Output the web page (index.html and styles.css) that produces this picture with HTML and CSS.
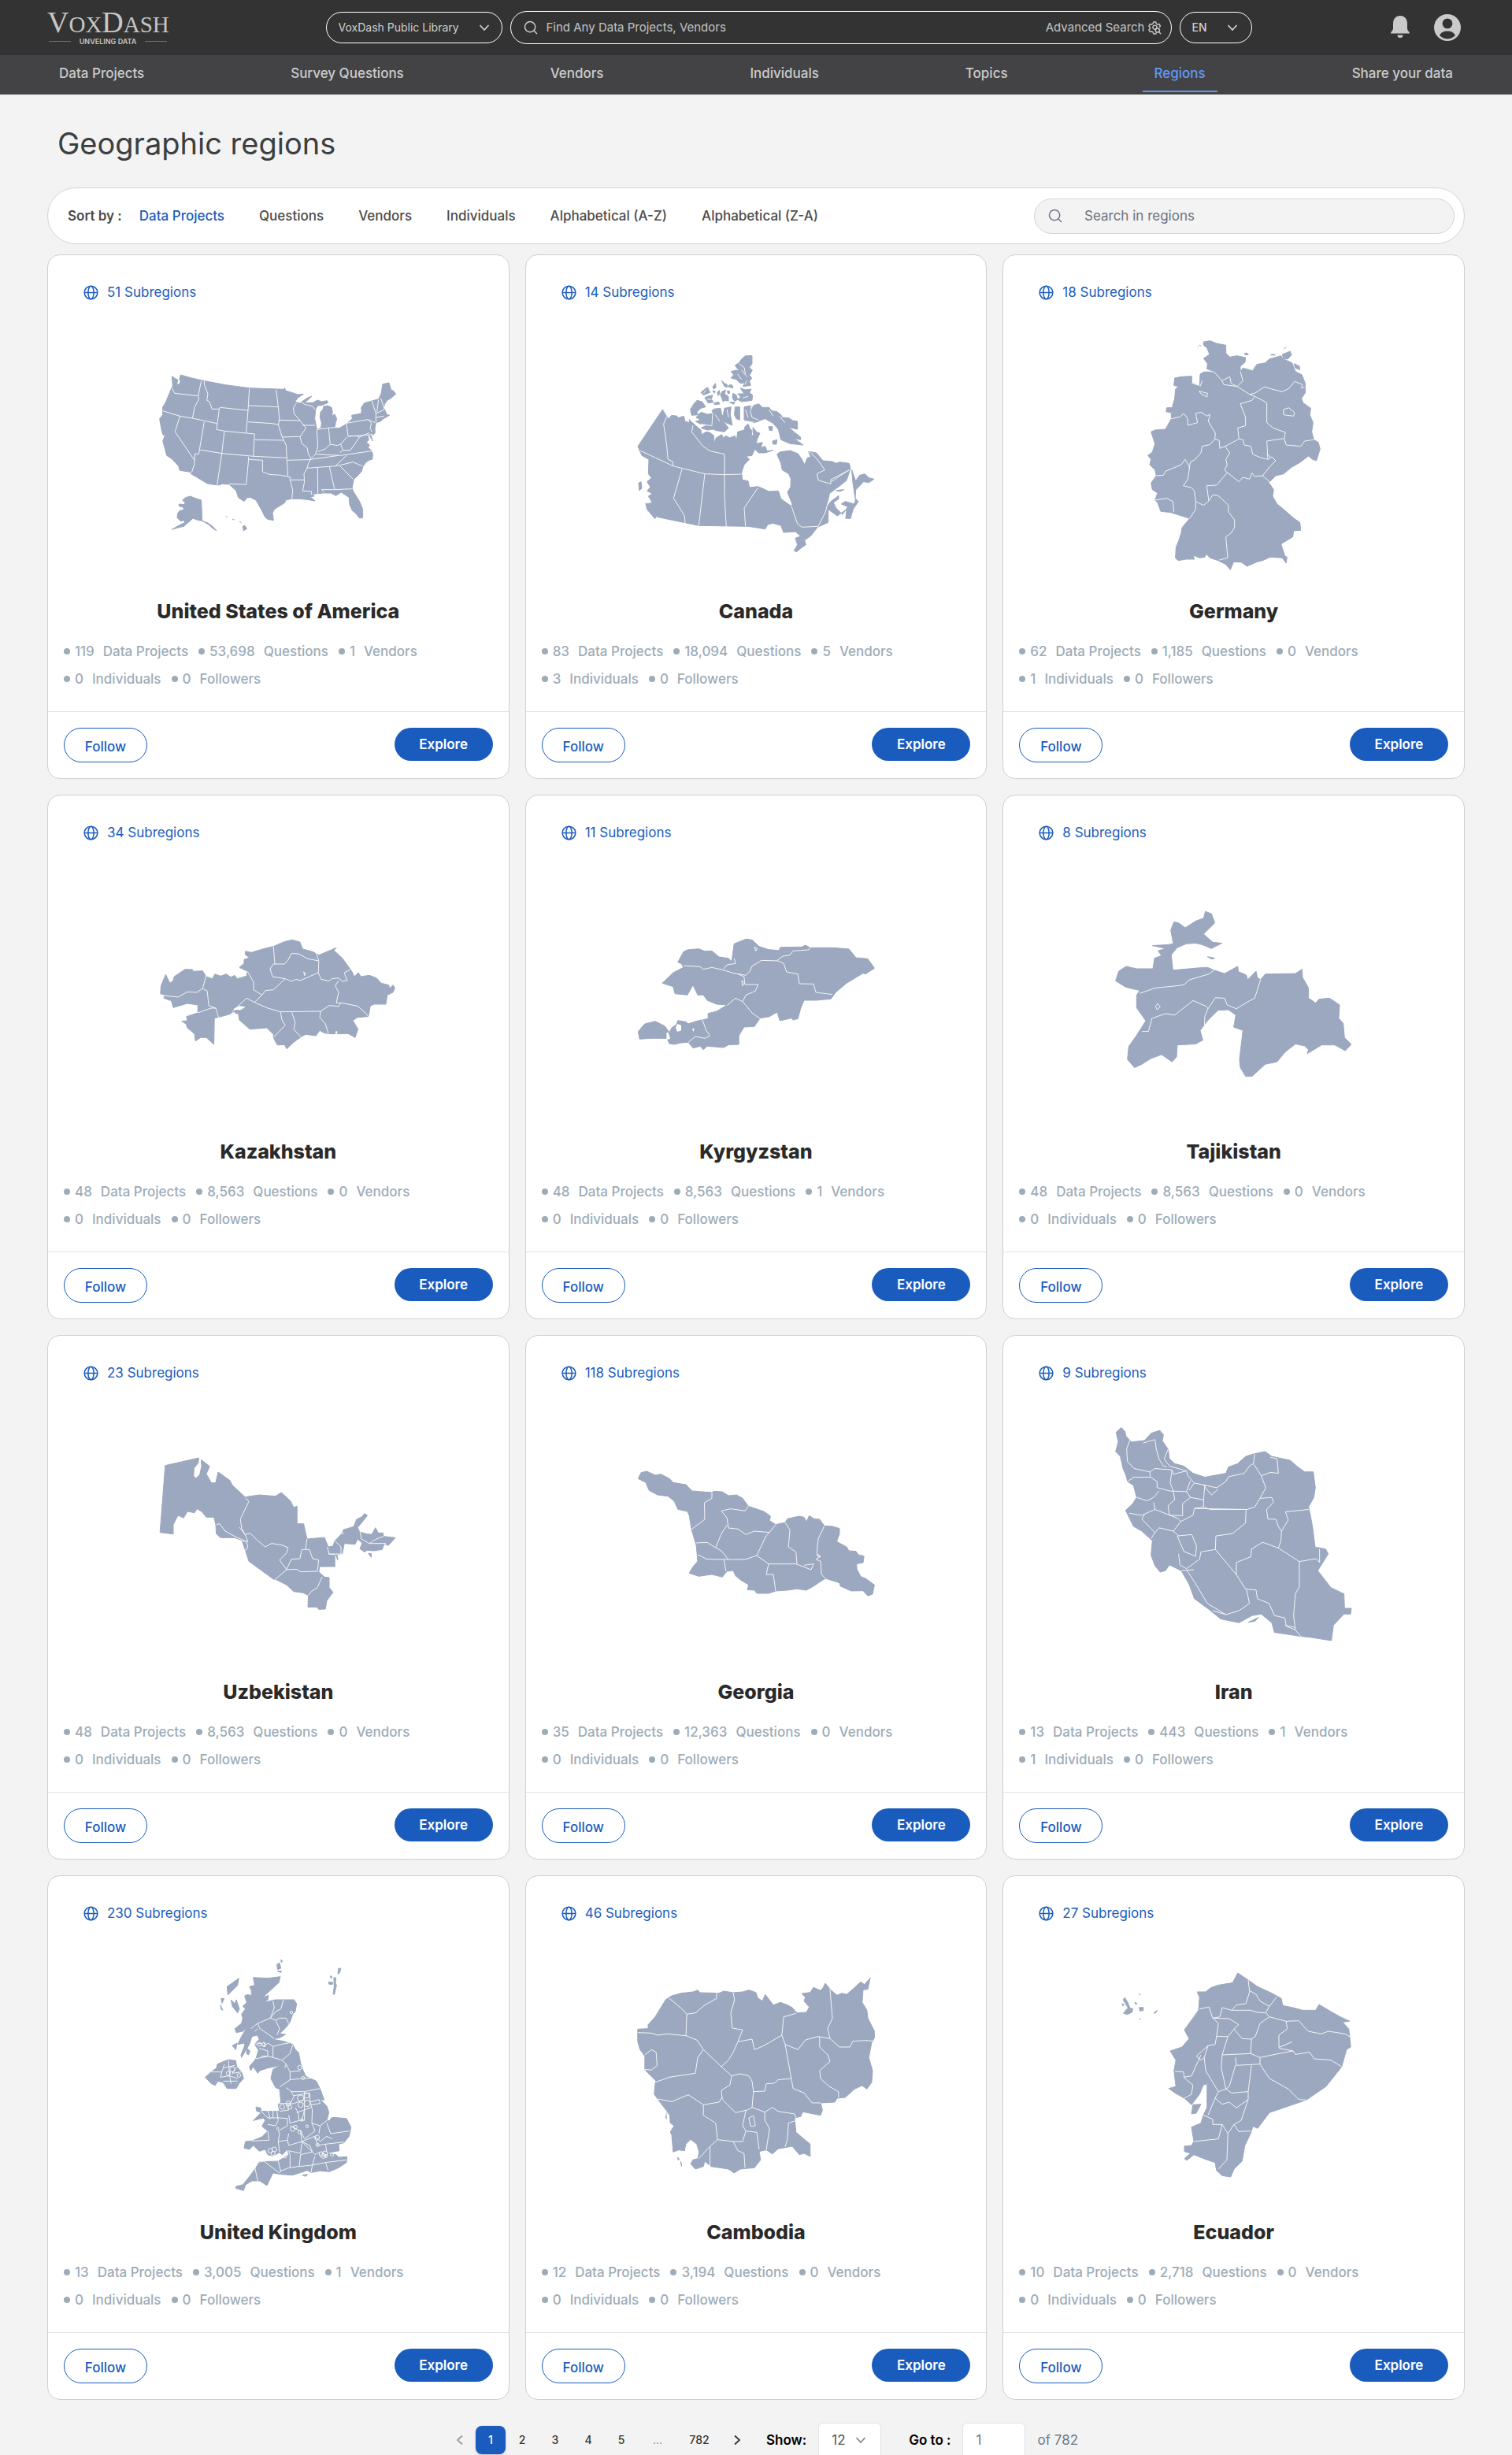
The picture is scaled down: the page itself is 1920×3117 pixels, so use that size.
FILE: index.html
```html
<!DOCTYPE html>
<html lang="en">
<head>
<meta charset="utf-8">
<meta name="viewport" content="width=device-width, initial-scale=1">
<title>VoxDash - Geographic regions</title>
<link rel="stylesheet" href="styles.css">
</head>
<body>
<svg class="sprite" aria-hidden="true">
  <symbol id="globe" viewBox="0 0 20 20"><g fill="none" stroke="currentColor" stroke-width="1.6"><circle cx="10" cy="10" r="8.8"/><ellipse cx="10" cy="10" rx="3.8" ry="8.8"/><path d="M1.2 10h17.6"/></g></symbol>
  <symbol id="chevron" viewBox="0 0 14 14"><path d="M1.5 4l5.500 6 5.500-6" fill="none" stroke="currentColor" stroke-width="1.800"/></symbol>
  <symbol id="search" viewBox="0 0 20 20"><g fill="none" stroke="currentColor" stroke-width="1.600"><circle cx="9" cy="9" r="7.400"/><path d="M14.500 14.500l4.300 4.300"/></g></symbol>
</svg>

<header>
  <div class="topbar">
    <a class="logo" href="#" aria-label="VoxDash">
      <span class="wordmark"><b>V</b>OX<b>D</b>ASH</span>
      <span class="tagline"><i></i>UNVELING DATA<i></i></span>
    </a>
    <div class="finder">
      <label class="pill library">
        <select aria-label="Library"><option>VoxDash Public Library</option></select>
        <svg class="chev"><use href="#chevron"/></svg>
      </label>
      <div class="pill find">
        <svg class="glass"><use href="#search"/></svg>
        <input type="text" placeholder="Find Any Data Projects, Vendors" aria-label="Find any data projects, vendors">
        <a href="#" class="advanced">Advanced Search
          <svg viewBox="0 0 20 20"><g fill="none" stroke="currentColor" stroke-width="1.700"><path d="M13 17.500h-1l-.6 1.300H8l-.8-2.500-2.200-1.200-2.400.6L1 12.800l1.800-1.900V9L1 7.200l1.700-3 2.400.7 2-1.200.8-2.500h3.500l.8 2.500 2 1.200 2.400-.7 1.600 3L16.500 9"/><circle cx="10" cy="9" r="3"/><circle cx="14" cy="13.500" r="3"/><path d="M16 15.800l3 3.200"/></g></svg>
        </a>
      </div>
      <label class="pill language">
        <select aria-label="Language"><option>EN</option></select>
        <svg class="chev thin"><use href="#chevron"/></svg>
      </label>
    </div>
    <div class="account">
      <button type="button" aria-label="Notifications"><svg width="26" height="30" viewBox="0 0 26 30"><path fill="currentColor" d="M13 0C7 0 4 4.500 4 10v6c0 3-3 4-3 6.500h24C25 20 22 19 22 16v-6C22 4.500 19 0 13 0zM9.500 24.500h7a3.500 3.500 0 0 1-7 0z"/></svg></button>
      <button type="button" aria-label="Account"><svg width="34" height="34" viewBox="0 0 34 34"><path fill="currentColor" fill-rule="evenodd" d="M17 0a17 17 0 1 1 0 34a17 17 0 1 1 0-34zM17 5.500a6.400 6.400 0 1 0 0 12.800a6.400 6.400 0 1 0 0-12.800zM17 21.500c-5 0-8.500 2-10 5.500a14 14 0 0 0 20 0c-1.500-3.500-5-5.500-10-5.500z"/></svg></button>
    </div>
  </div>
  <nav class="mainnav" aria-label="Main">
    <a href="#">Data Projects</a><a href="#">Survey Questions</a><a href="#">Vendors</a><a href="#">Individuals</a><a href="#">Topics</a><a href="#" class="current" aria-current="page">Regions</a><a href="#">Share your data</a>
  </nav>
</header>

<main>
  <h1>Geographic regions</h1>
  <div class="sortbar">
    <span class="sortlabel">Sort by :</span>
    <div class="sorts"><a href="#" class="on">Data Projects</a><a href="#">Questions</a><a href="#">Vendors</a><a href="#">Individuals</a><a href="#">Alphabetical (A-Z)</a><a href="#">Alphabetical (Z-A)</a></div>
    <div class="regionsearch"><svg class="glass"><use href="#search"/></svg><input type="text" placeholder="Search in regions" aria-label="Search in regions"></div>
  </div>

  <section class="grid">
    <article class="card">
      <a href="#" class="sub"><svg><use href="#globe"/></svg>51 Subregions</a>
      <svg class="map" viewBox="0 0 300 300" role="img" aria-label="Map of the United States of America"><g transform="translate(-13 -5) scale(.3333)">
        <path class="land" d="M85 173L98 182 107 186 104 203 112 205 117 195 114 183 118 168 160 180 210 191 290 206 380 218 512 223 514 217 518 228 545 236 565 243 586 241 565 255 554 270 572 276 600 256 618 249 605 262 590 274 622 274 640 264 655 270 676 266 680 274 655 284 640 285 632 300 629 335 637 376 653 370 655 350 649 330 651 310 660 300 663 288 678 285 693 292 697 310 693 325 705 318 713 335 708 352 705 370 722 371 750 355 772 335 770 322 806 315 808 300 805 295 818 275 847 267 872 260 882 240 888 203 912 198 920 225 930 230 938 241 918 258 905 265 895 280 892 293 898 305 903 318 914 322 890 335 880 345 862 350 858 372 859 388 850 398 840 390 845 405 850 420 838 400 830 395 835 415 826 425 838 435 832 445 844 455 850 470 848 490 838 492 825 500 812 518 808 535 790 555 778 565 771 600 778 615 800 650 812 680 812 712 800 714 785 695 772 685 762 662 760 635 745 625 730 615 710 628 690 618 660 618 640 620 620 622 628 630 612 632 630 648 600 643 570 640 540 640 518 645 515 655 475 680 468 695 472 722 450 718 440 710 425 680 405 645 385 635 372 635 360 650 338 635 330 610 303 585 278 583 262 588 220 582 158 545 156 538 115 532 110 515 85 488 65 475 60 455 50 420 58 400 50 395 44 370 38 335 50 320 50 290 60 275 82 222 88 210Z"/>
        <path class="land" d="M197 645L200 724 180 720 165 714 150 728 130 745 108 750 85 757 110 742 135 730 130 722 118 725 105 712 107 695 115 685 130 682 128 672 112 668 112 660 132 662 135 655 125 645 138 635 155 630 175 638ZM200 724L222 732 240 745 255 762 240 752 225 738ZM355 745l6 -4 10 12-13 9zM342 727l8 4M290 706l6 4M315 717l8 3"/>
        <path class="line" d="M85 218L95 238 185 248M197 190L185 248 187 262 172 290 163 333M50 305L115 325 163 333 256 353M115 325L97 385 170 492M208 190L208 205 222 240 218 265 228 270 238 298 265 298 268 292 375 303M265 298L255 376 285 382 400 393 395 478M380 220L375 303 368 388M378 285L490 290 495 340 490 357 505 405 520 435 523 490M482 224L490 290M375 347L465 353 490 357M400 415L510 417M208 348L187 470 173 468 170 510 160 540M190 453L275 467 257 588M285 382L275 467 395 478 523 484M377 480L377 490 430 493 430 537 455 547 500 550 535 557 535 568 545 605 542 640M377 490L368 586 303 583M523 490L527 553M523 493L605 491M535 568L588 568M490 340L573 342 590 362 595 372 573 403 505 405M573 403L580 430 600 445 605 470 615 485 605 505 600 523 588 545 590 575 583 610 617 612 617 625M573 342L550 315 548 292 560 275M565 262L590 280 620 287 630 300M582 360L630 360M637 376L641 440 632 470 617 485M637 376L682 370 708 368M682 370L688 432 670 450 641 460M688 432L715 437 728 432 737 455 765 455 800 405 785 400 756 402 750 352 832 338 845 352 840 372 848 385M728 432L752 405M800 405L838 388M756 402L850 395M725 465L737 455M632 470L725 475 845 458M605 491L720 475M600 523L708 515 750 475M708 515L725 512 775 500 810 515M725 515L775 565M640 520L641 620M685 517L705 605 655 605 665 615M705 605L771 602M832 338L858 350M847 267L862 315 862 350M872 262L866 310M880 255L895 300 862 315M862 330L893 325"/>
      </g></svg>
      <h2>United States of America</h2>
      <ul><li>119<span>Data Projects</span></li><li>53,698<span>Questions</span></li><li>1<span>Vendors</span></li><li>0<span>Individuals</span></li><li>0<span>Followers</span></li></ul>
      <footer><button type="button" class="follow">Follow</button><button type="button" class="explore">Explore</button></footer>
    </article>

    <article class="card">
      <a href="#" class="sub"><svg><use href="#globe"/></svg>14 Subregions</a>
      <svg class="map" viewBox="0 0 300 300" role="img" aria-label="Map of Canada"><g transform="translate(-20 -5) scale(.3333)">
        <path class="land" d="M154 300L170 327 178 335 188 322 210 325 212 332 235 325 240 345 258 350 255 338 270 352 285 365 300 378 303 395 320 385 335 388 350 400 350 430 358 408 380 395 385 408 395 400 410 408 430 400 436 420 440 385 465 378 468 365 480 355 487 372 495 380 492 405 500 395 498 368 512 385 525 390 515 412 510 430 535 425 528 445 545 440 552 458 575 455 545 465 520 465 505 450 490 440 470 435 500 437 506 450 495 475 472 478 485 490 465 510 455 540 458 568 480 572 485 597 518 593 560 612 595 610 605 640 645 668 648 660 630 615 642 595 643 565 635 545 610 530 605 505 590 470 600 462 640 456 670 468 685 490 695 510 705 485 718 480 710 460 740 465 765 495 800 498 815 505 830 500 865 505 870 525 855 570 830 590 790 620 780 670 795 650 825 628 825 640 805 655 815 675 840 700 860 670 835 660 850 650 885 660 890 640 900 650 880 680 870 715 852 715 855 680 820 705 785 680 785 730 745 748 720 780 695 798 700 815 685 825 665 842 655 838 668 815 660 790 680 782 660 765 615 768 605 742 575 733 555 738 545 755 480 745 292 742 138 710 120 700 90 660 115 655 100 630 115 620 95 610 108 595 95 575 112 560 100 545 102 490 75 475 60 440ZM875 530L890 572 905 550 925 545 940 560 960 565 940 578 920 575 890 606 888 640 878 570ZM500 285L520 278 535 292 560 292 570 305 590 308 605 320 610 330 635 332 650 342 668 345 668 375 635 368 655 385 680 405 680 415 655 410 690 435 640 430 605 415 600 395 595 375 575 352 545 335 500 350 520 345 490 345 480 310ZM465 290L490 285 485 310 500 345 465 340ZM495 95L470 95 455 108 445 122 430 132 440 145 452 152 435 150 415 155 425 168 415 180 435 185 450 200 468 198 460 212 490 208 485 192 494 180 485 170 496 150 485 140 495 125ZM450 218L470 225 492 222 485 235 497 245 495 265 475 268 455 270 440 262 452 252 440 240 465 240ZM260 300L272 280 285 265 305 270 318 290 300 295 285 310 290 320 265 322ZM282 330L300 310 325 318 345 315 342 305 350 298 375 295 380 320 395 335 390 350 405 370 390 385 360 380 345 375 325 378 300 370 325 360 298 355 280 345 300 340ZM390 295L415 290 412 320 420 360 395 350 385 320ZM430 290L448 290 448 340 435 335 428 320ZM300 235L312 225 325 215 330 225 335 235 322 240 310 245ZM315 255L325 250 345 245 340 260 348 272 328 275ZM380 190L390 200 400 205 400 215 390 212 385 202ZM402 212L412 205 420 208 422 218ZM345 215L355 200 358 215 350 222ZM375 245L380 232 395 225 390 240 405 250 405 268 392 265 385 270ZM422 238L435 245 440 262 428 268 420 255ZM362 235l8-8 2 14-6 6zM345 228l10 2-4 8zM400 230l8-2 2 10-6 2zM410 272l20 0-6 8zM350 275l18-4 4 8-20 2zM90 658L110 678 132 705 125 716 95 680ZM63 580L72 575 75 600 65 608ZM558 365L573 365 572 380 562 380ZM573 420L590 415 588 432 575 432ZM815 608L845 605 830 612Z"/>
        <path class="line" d="M170 327L158 355 165 400 170 440 175 490 192 497 194 515M70 457L194 515 315 545 390 548 455 546M228 527L196 638 238 705 240 735M315 545L292 742M390 470L390 630 397 748M390 470L335 458 308 440 265 385 270 360M300 355L342 362 345 310M518 597L465 675 470 745M645 668L668 735 685 748 745 745M712 460L740 485 772 530 742 545 748 570 795 583 795 567 865 530M797 575L865 530M785 650L775 690 745 748M500 280L488 305 495 330 520 340M470 300L480 330M455 150L475 175M445 125L465 140 470 165M440 165L455 185M475 190L468 205M320 225L310 238M325 260L340 262M460 255L480 250M400 300L405 330M355 320L372 345M600 325L620 350M560 300L575 325"/>
      </g></svg>
      <h2>Canada</h2>
      <ul><li>83<span>Data Projects</span></li><li>18,094<span>Questions</span></li><li>5<span>Vendors</span></li><li>3<span>Individuals</span></li><li>0<span>Followers</span></li></ul>
      <footer><button type="button" class="follow">Follow</button><button type="button" class="explore">Explore</button></footer>
    </article>

    <article class="card">
      <a href="#" class="sub"><svg><use href="#globe"/></svg>18 Subregions</a>
      <svg class="map" viewBox="0 0 300 300" role="img" aria-label="Map of Germany"><g transform="translate(-17 -5) scale(.3333)">
        <path class="land" d="M385 42L410 38 435 48 470 55 470 85 485 100 512 95 545 102 543 120 525 135 525 155 535 142 572 152 588 128 620 122 635 108 680 95 690 108 722 122 735 155 760 168 772 200 773 235 758 258 765 275 793 295 790 320 802 350 797 385 805 415 822 425 829 450 815 495 800 490 785 477 750 503 720 520 690 545 660 552 637 575 628 570 652 605 648 630 665 660 690 680 730 715 752 730 755 760 728 762 725 785 680 812 695 858 703 862 700 885 685 865 640 862 610 875 590 880 550 897 530 882 500 880 487 910 470 890 440 875 410 865 395 850 390 862 370 865 345 855 350 870 320 870 288 875 278 865 280 825 290 800 300 770 303 750 332 715 285 700 260 692 222 688 210 655 200 645 210 618 190 605 185 580 205 552 200 530 180 510 185 490 173 475 190 462 200 430 185 385 200 378 240 375 262 335 262 312 242 308 245 293 265 293 275 258 278 222 290 212 272 208 275 180 300 175 340 173 340 200 370 212 372 165 385 157 425 155 398 145 400 125 385 105 408 90 398 65 385 55ZM540 88L548 84 556 90 546 92ZM685 90L715 78 720 92 705 108 690 105ZM730 125L750 135 752 148 735 142ZM640 92l12-3 6 4zM692 68l8-5M362 62l3 2M368 55l8 2"/>
        <path class="line" d="M398 152L425 157 455 190 462 205 513 212 535 190 525 155M455 190L485 175 490 200 513 212 560 242 580 250 610 265 626 275 626 350 650 370 697 387 692 410 700 435 755 440 770 420 805 415M560 242L580 238 618 213 645 222 685 232 710 220 732 193 762 205 757 218 770 215M580 250L570 265 525 278 545 330 545 362 515 370 520 412 467 440 447 448 445 418 428 412M262 335L295 328 310 315 325 335 325 360 362 350 355 315 375 310 398 325 410 318 403 345 430 390 428 412 410 433 380 440 375 465 350 492 335 500 330 525M205 552L232 550 240 535 300 510 315 490 332 520 325 565 308 590 340 598 350 610 355 650 355 680 332 715M467 440L485 465 470 490 475 510 465 530 475 540 520 575 535 558 560 565 570 542 580 555 610 552 640 515 660 495 645 480 630 490 600 482 572 470 565 440 540 435 535 415 520 412M630 490L626 420 692 410M640 480L626 470M475 540L435 588 397 590 405 648 385 665 355 650M405 648L420 625 440 628 470 655 480 665 480 690 503 720 503 750 490 770 470 785 477 865 445 873M200 645L245 638 268 650 272 690M610 552L637 575M368 230L400 238 398 252 375 240ZM690 320L690 300 710 293 732 312 728 325ZM340 200L355 195 350 205M372 212L380 190"/>
      </g></svg>
      <h2>Germany</h2>
      <ul><li>62<span>Data Projects</span></li><li>1,185<span>Questions</span></li><li>0<span>Vendors</span></li><li>1<span>Individuals</span></li><li>0<span>Followers</span></li></ul>
      <footer><button type="button" class="follow">Follow</button><button type="button" class="explore">Explore</button></footer>
    </article>

    <article class="card">
      <a href="#" class="sub"><svg><use href="#globe"/></svg>34 Subregions</a>
      <svg class="map" viewBox="0 0 300 300" role="img" aria-label="Map of Kazakhstan"><g transform="translate(-13 69) scale(.6 .3333)">
        <path class="land" d="M23 245L24 215 34 172 43 205 50 195 52 180 75 152 91 153 92 160 112 158 120 180 133 188 138 170 150 178 162 170 172 182 180 175 185 188 205 178 207 160 190 145 200 130 200 115 211 108 202 95 203 83 215 88 245 72 262 65 285 47 302 40 318 48 324 75 345 85 358 98 395 70 390 80 408 110 428 160 433 180 442 165 447 180 465 175 480 185 490 205 506 212 508 225 515 212 519 222 515 240 503 250 500 285 475 285 467 292 463 332 440 335 430 347 441 380 435 412 420 397 385 398 370 395 360 385 352 405 330 400 320 410 305 430 290 455 286 440 270 440 262 412 262 400 248 375 212 380 190 345 188 322 178 318 160 328 137 338 136 438 120 412 108 412 97 425 95 398 80 375 77 360 68 350 80 348 78 332 102 318 102 288 80 282 50 298 46 272 30 262 32 250Z"/>
        <path class="line" d="M23 250L60 258 80 238 100 240 112 225 122 235 125 290 140 300 146 335M120 175L112 225M102 318L130 300 140 300M207 160L220 200 220 230 238 250 222 278 205 262 180 305 170 328M238 250L245 233 262 230 287 188 300 198 310 190 318 195 335 182 357 165 358 120 335 112 315 93 300 92 292 120 285 132 262 132 255 150 260 180 287 188M262 65L265 132M352 88L358 120M357 165L363 190 380 197 385 188 400 185 408 198 418 195 412 165 425 153M400 195L393 215 400 240 395 280 405 280 400 293 380 290 362 312 277 314 250 300 222 278M405 280L440 292 458 320 463 332M277 314L280 345 287 365 262 412M301 316L308 355 305 380 320 410M362 312L360 335 372 360 378 395M326 162l4 5-2 9z"/>
        <path class="gap" d="M178 302l12-10 13 3-10 12-15 0zM175 318l6-3-2 20zM394 388l3 0v10h-4z"/>
      </g></svg>
      <h2>Kazakhstan</h2>
      <ul><li>48<span>Data Projects</span></li><li>8,563<span>Questions</span></li><li>0<span>Vendors</span></li><li>0<span>Individuals</span></li><li>0<span>Followers</span></li></ul>
      <footer><button type="button" class="follow">Follow</button><button type="button" class="explore">Explore</button></footer>
    </article>

    <article class="card">
      <a href="#" class="sub"><svg><use href="#globe"/></svg>11 Subregions</a>
      <svg class="map" viewBox="0 0 300 300" role="img" aria-label="Map of Kyrgyzstan"><g transform="translate(-620 69) scale(.6 .3333)">
        <path class="land" d="M1118 125L1130 85 1138 78 1162 74 1175 83 1190 82 1205 105 1225 110 1232 122 1237 55 1262 37 1275 40 1290 65 1310 77 1332 80 1335 68 1380 67 1388 60 1398 70 1450 70 1480 75 1495 108 1520 112 1534 148 1515 170 1510 167 1475 205 1452 240 1442 265 1410 270 1385 270 1378 300 1372 340 1362 345 1358 338 1334 348 1328 315 1312 332 1292 338 1280 370 1258 372 1247 405 1247 438 1225 440 1215 450 1180 445 1172 458 1165 445 1150 452 1140 430 1125 432 1110 438 1100 435 1095 415 1060 415 1037 418 1034 390 1042 372 1048 360 1070 350 1090 368 1100 392 1105 375 1115 362 1118 347 1135 352 1140 360 1160 348 1170 345 1182 340 1182 320 1200 312 1222 288 1200 285 1180 270 1172 250 1160 250 1150 212 1138 250 1112 245 1108 218 1085 205 1108 165 1130 145 1125 130Z"/>
        <path class="line" d="M1130 138L1165 142 1172 152 1190 145 1215 155 1232 165 1262 175 1270 160 1275 140 1295 118 1330 120 1342 130 1348 162 1372 170 1375 207 1405 208 1410 240 1445 248M1328 118L1340 102 1355 98 1362 82 1395 78 1398 68M1215 150L1222 135 1240 130 1237 110M1245 170L1258 180 1260 210 1288 210 1282 235 1262 250 1255 275 1240 262 1222 290M1255 275L1275 318 1292 340M1170 345L1178 385 1186 405 1175 415 1155 408 1140 430M1253 195l6 8-4 12zM1280 68l6 5-3 9z"/>
        <path class="gap" d="M1117 360l8 5 0 20-8 5-4-15zM1094 392l4 2 4 22-8 5zM1148 378l5 0-2 12z"/>
      </g></svg>
      <h2>Kyrgyzstan</h2>
      <ul><li>48<span>Data Projects</span></li><li>8,563<span>Questions</span></li><li>1<span>Vendors</span></li><li>0<span>Individuals</span></li><li>0<span>Followers</span></li></ul>
      <footer><button type="button" class="follow">Follow</button><button type="button" class="explore">Explore</button></footer>
    </article>

    <article class="card">
      <a href="#" class="sub"><svg><use href="#globe"/></svg>8 Subregions</a>
      <svg class="map" viewBox="0 0 300 300" role="img" aria-label="Map of Tajikistan"><g transform="translate(-17 29) scale(.3333 .6122)">
        <path class="land" d="M50 172L62 152 90 142 130 147 192 147 198 125 225 120 212 110 240 105 190 99 250 97 270 95 260 67 272 50 290 52 315 62 355 48 385 42 392 28 415 33 428 52 385 75 420 92 455 94 415 105 380 97 355 94 320 95 285 103 262 118 268 150 370 145 400 144 425 150 465 157 515 142 518 153 548 160 553 170 585 152 590 165 602 170 620 158 735 157 760 148 762 165 785 187 785 208 812 218 825 210 865 208 903 222 900 250 917 260 922 290 948 304 925 317 885 305 835 305 780 323 785 315 770 307 735 303 695 320 665 340 620 345 570 370 545 370 525 352 522 335 535 275 500 268 508 243 480 232 440 233 400 255 372 275 382 295 355 303 285 305 282 330 265 340 225 325 185 333 150 345 122 352 95 335 100 308 130 285 165 255 130 228 130 202 142 192 88 185ZM400 122l28 3-12 2z"/>
        <path class="line" d="M142 198L200 187 290 182 312 180 330 170 405 158 425 150M150 277L175 277 188 250 240 240 275 243 345 213 395 225 402 230 430 207 465 208 475 222 510 230 555 215 580 208 602 170M402 230L390 245 388 268M202 225l8-6 10 7-12 6z"/>
      </g></svg>
      <h2>Tajikistan</h2>
      <ul><li>48<span>Data Projects</span></li><li>8,563<span>Questions</span></li><li>0<span>Vendors</span></li><li>0<span>Individuals</span></li><li>0<span>Followers</span></li></ul>
      <footer><button type="button" class="follow">Follow</button><button type="button" class="explore">Explore</button></footer>
    </article>

    <article class="card">
      <a href="#" class="sub"><svg><use href="#globe"/></svg>23 Subregions</a>
      <svg class="map" viewBox="0 0 300 300" role="img" aria-label="Map of Uzbekistan"><g transform="translate(-13 42) scale(.6 .3333)">
        <path class="land" d="M22 320L33 65 104 36 103 55 94 75 93 105 98 114 106 100 110 68 109 43 127 68 120 97 131 132 140 130 145 90 170 122 175 140 202 185 232 177 266 182 279 168 298 200 305 225 312 220 312 287 326 287 333 345 370 339 378 375 388 372 392 352 405 328 410 310 432 298 438 270 448 262 455 248 461 256 440 302 445 318 458 325 470 328 478 302 484 322 494 322 495 335 520 340 505 370 497 362 492 385 475 390 460 388 455 395 445 382 450 360 440 345 435 365 412 362 408 400 392 408 392 450 360 450 358 470 370 490 380 492 380 530 388 548 375 580 372 612 358 613 353 604 335 605 336 560 325 550 305 545 290 520 268 500 262 498 210 430 203 390 195 350 180 340 150 340 141 325 140 290 136 262 120 262 110 240 100 230 95 245 80 240 72 265 60 255 50 290 50 326ZM463 400l6 0 0 15zM395 410l3 0 0 16z"/>
        <path class="line" d="M202 188L210 202 192 270 195 305 202 328 213 323 228 350 245 375 258 362 280 368 293 378 290 398 275 425 290 462 310 460 320 470 355 468M141 290L148 287 160 315 180 335 205 355 208 375 203 390M190 300L202 328 208 355 195 352M290 462L265 500M290 460L300 422 318 420 322 385 338 385 345 420 358 425 355 468M333 345L330 385M365 490L355 530 342 545 336 560M376 375L380 402 405 402 405 375 392 352M378 402L392 405M445 310L448 345 465 362 480 345 495 335M465 362L500 362M403 320l5 -4 1 10z"/>
      </g></svg>
      <h2>Uzbekistan</h2>
      <ul><li>48<span>Data Projects</span></li><li>8,563<span>Questions</span></li><li>0<span>Vendors</span></li><li>0<span>Individuals</span></li><li>0<span>Followers</span></li></ul>
      <footer><button type="button" class="follow">Follow</button><button type="button" class="explore">Explore</button></footer>
    </article>

    <article class="card">
      <a href="#" class="sub"><svg><use href="#globe"/></svg>118 Subregions</a>
      <svg class="map" viewBox="0 0 300 300" role="img" aria-label="Map of Georgia"><g transform="translate(-620 42) scale(.6 .3333)">
        <path class="land" d="M1034 115L1040 92 1052 87 1070 102 1082 98 1100 115 1108 130 1135 138 1148 162 1190 168 1195 163 1212 165 1225 180 1242 177 1255 190 1267 220 1300 240 1314 258 1312 275 1325 290 1345 282 1350 268 1375 258 1385 262 1390 280 1396 256 1406 268 1418 270 1428 295 1445 297 1460 305 1460 325 1454 355 1475 375 1480 390 1495 392 1500 405 1512 410 1510 435 1496 440 1497 460 1505 488 1515 495 1534 520 1530 555 1520 562 1510 542 1485 543 1462 525 1460 512 1430 495 1405 525 1390 540 1370 535 1350 540 1325 543 1310 552 1285 552 1280 540 1265 538 1268 520 1250 500 1240 485 1235 465 1222 468 1212 490 1190 480 1162 487 1142 475 1150 450 1160 430 1157 370 1147 310 1142 255 1138 240 1118 232 1110 200 1097 182 1075 177 1057 160 1050 130Z"/>
        <path class="line" d="M1190 168L1190 190 1174 207 1175 270 1147 308M1267 220L1260 238 1230 230 1210 238 1222 265 1225 303 1245 307 1262 328 1280 315 1312 320 1325 290M1222 292L1210 325 1198 378M1157 360L1180 358 1198 378 1210 390 1225 423M1160 405L1180 422 1215 423 1260 423 1285 408 1305 332 1312 320M1285 408L1310 440 1368 440 1400 462 1405 440 1385 445M1345 282L1355 310 1352 375 1368 395 1370 440M1428 295L1415 345 1412 400 1420 412 1410 422 1420 430 1422 480 1430 495M1310 440L1305 480 1320 480 1325 543M1215 423L1220 468M1412 405l7 4-3 6z"/>
      </g></svg>
      <h2>Georgia</h2>
      <ul><li>35<span>Data Projects</span></li><li>12,363<span>Questions</span></li><li>0<span>Vendors</span></li><li>0<span>Individuals</span></li><li>0<span>Followers</span></li></ul>
      <footer><button type="button" class="follow">Follow</button><button type="button" class="explore">Explore</button></footer>
    </article>

    <article class="card">
      <a href="#" class="sub"><svg><use href="#globe"/></svg>9 Subregions</a>
      <svg class="map" viewBox="0 0 300 300" role="img" aria-label="Map of Iran"><g transform="translate(-17 -658) scale(.3333 .6122)">
        <path class="land" d="M52 1110L72 1100 85 1108 90 1118 110 1130 160 1127 185 1112 218 1106 232 1115 228 1128 250 1145 255 1165 275 1175 310 1180 345 1195 390 1203 470 1195 480 1182 515 1175 545 1160 575 1155 620 1150 645 1160 715 1168 740 1180 770 1192 803 1192 811 1225 805 1245 785 1265 792 1282 800 1305 810 1348 850 1352 860 1362 820 1397 870 1432 920 1445 922 1475 948 1475 945 1487 920 1487 880 1510 872 1542 790 1535 755 1533 655 1525 645 1505 605 1487 570 1490 520 1505 450 1497 400 1475 350 1455 330 1425 300 1397 255 1385 240 1397 220 1400 200 1387 185 1365 190 1335 150 1315 118 1305 100 1285 88 1272 115 1258 130 1245 118 1220 95 1212 90 1200 78 1185 68 1160 50 1150 60 1130ZM555 1504l40-10-15 8z"/>
        <path class="line" d="M105 1125L92 1145 95 1170 120 1185 180 1192 182 1203 208 1212 208 1225M155 1132L200 1125 205 1145 215 1165 232 1180 245 1182M250 1145L235 1165 255 1180 320 1190 325 1200 350 1215 435 1225 470 1212 480 1202 540 1195 560 1180 575 1175 580 1155M180 1192L200 1185 265 1188 270 1197 320 1190M95 1212L120 1203 182 1203M265 1188L258 1215 270 1232 320 1233 335 1210M210 1225L258 1232 270 1232M130 1245L170 1252 195 1245 215 1232M102 1278L150 1282 200 1270 195 1255M160 1280L150 1290 200 1318 215 1308 270 1315 298 1295 345 1282 350 1268 547 1270 545 1298 495 1320 432 1325 430 1353 510 1405 510 1380 565 1368 568 1352 610 1338 670 1350 750 1378 750 1430 735 1445 728 1490 735 1520 700 1512 695 1495 655 1490 635 1465 590 1455 585 1437 545 1435 510 1405M200 1270L285 1288 298 1295M185 1330L200 1318M270 1232L275 1250 250 1262 255 1282 305 1283 305 1258 335 1245M320 1233L335 1245 385 1250 390 1218M350 1268L385 1265 385 1250M350 1215L330 1230M385 1220L415 1240 440 1228M385 1265L410 1270 550 1270 580 1265 600 1247 622 1225 605 1200 640 1193 670 1195 665 1165 640 1162M575 1175L605 1200M600 1247L645 1245 652 1255 625 1270 630 1290 660 1290 670 1305 682 1315 680 1335 670 1350M682 1315L708 1292 697 1275 785 1270M285 1325L340 1322 358 1345 355 1367 310 1357ZM290 1362L295 1385 320 1393 370 1373 375 1358 430 1353M270 1315L290 1325M320 1395L350 1420 400 1465 470 1488 520 1480 560 1465 548 1435M300 1397L348 1395M420 1480L470 1488M750 1378L815 1372 827 1380 827 1352M735 1520L755 1533M695 1510L735 1515"/>
      </g></svg>
      <h2>Iran</h2>
      <ul><li>13<span>Data Projects</span></li><li>443<span>Questions</span></li><li>1<span>Vendors</span></li><li>1<span>Individuals</span></li><li>0<span>Followers</span></li></ul>
      <footer><button type="button" class="follow">Follow</button><button type="button" class="explore">Explore</button></footer>
    </article>

    <article class="card">
      <a href="#" class="sub"><svg><use href="#globe"/></svg>230 Subregions</a>
      <svg class="map" viewBox="0 0 300 300" role="img" aria-label="Map of the United Kingdom"><g transform="translate(37 -4) scale(.3333)">
        <path class="land" d="M245 95L300 98 348 92 342 115 295 158 280 172 303 163 300 180 285 190 330 180 400 180 410 195 405 225 395 235 385 265 370 285 355 300 345 310 368 312 345 325 315 330 360 338 395 350 405 370 418 382 425 420 435 450 445 472 485 490 500 520 515 562 500 560 525 585 533 610 525 640 512 645 535 640 545 628 600 632 617 665 610 700 590 725 570 730 572 755 520 765 560 770 570 780 602 778 600 800 570 820 535 835 500 832 465 838 450 830 420 840 395 848 350 845 320 840 310 860 297 888 270 870 240 870 215 885 208 907 178 898 180 890 205 885 225 860 255 820 268 797 340 795 380 770 375 750 355 770 345 762 320 775 300 770 290 750 268 757 245 735 230 750 210 745 215 720 240 718 278 702 300 680 278 662 290 640 285 630 245 640 270 615 275 605 345 605 340 580 350 570 345 520 330 515 312 480 320 445 350 430 300 440 270 450 262 460 245 435 235 450 230 435 255 405 265 372 250 350 268 330 260 315 240 320 230 350 215 375 200 400 198 390 212 355 212 345 185 350 200 320 215 295 240 270 205 300 180 305 175 290 200 270 205 250 200 235 215 215 205 205 220 190 212 165 225 160 238 165 238 145 230 130 250 125ZM62 475L85 455 105 440 108 425 150 408 178 412 182 435 200 455 208 480 190 500 180 518 145 518 130 495 110 490 100 506 85 500ZM145 130L190 98 185 125 148 162ZM160 180L175 195 180 180 192 215 185 230 165 205ZM122 175l12 0-8 18zM120 200l8 20-6-4zM222 365l10 10-5 15-8-5zM165 355l18-10-5 25zM255 588l20 5-3 15-14-3zM432 848l20-3-8 8zM335 45l10-5 5 20-12 5zM570 60l8 0-3 16-8 6zM552 95l8 2-2 18 4 10-8 34-5 0 4-28zM532 112l16 2-2 8-14-2zM538 90l6 0-2 10zM338 72l14-2-2 6zM350 28l6 4-4 6z"/>
        <path class="line" d="M235 290L262 270 310 250 325 210 320 185M360 180L350 215 330 225 310 250 330 258 345 250 370 250 380 270M330 258L345 290 335 315M262 270L270 290 300 310 325 328M250 300L262 290 M250 350L275 345 285 360 300 345 320 358 350 350 380 345M285 340L290 360M268 365L300 375 300 395 275 395M320 358L320 400 300 395M320 400L355 410 385 385 395 352M355 410L370 425 365 440M255 405L300 395M370 425L385 455 425 450M385 455L385 485 345 512M385 485L425 480 470 478M370 515L390 530 440 530 500 518M390 530L400 550 385 575 345 575M400 545L460 535 462 570 495 560M440 530L440 560 400 575 370 580 380 600 345 605M462 570L470 600 468 650 500 660 525 640M495 560L500 575 465 580M275 605L300 630 345 630 375 632M300 600L310 635M320 600L320 630M335 605L340 640 330 660 300 655M405 590L415 610 420 640 385 650 380 620M440 560L440 640 420 640M468 650L480 680 440 710 425 680 385 660M375 632L375 660 340 680 345 690M425 680L430 720 480 700 500 720 525 700 545 710M500 660L495 690M525 650L540 690 610 680M300 680L305 715 240 718M345 690L340 720 375 715 380 690M340 720L345 760M375 715L380 735 430 720 425 765 380 755 385 770 385 820M430 720L460 735 470 760 425 770M430 720L480 770 500 760M480 700L490 735 520 730 590 722M520 730L525 760M340 795L350 835M260 800L285 795 345 840 M250 815L262 870M345 835L380 820 420 815 425 770M420 815L470 810 480 775M470 810L520 800 600 790M520 800L530 830M470 810L465 838M85 455L125 455 135 425M125 455L120 475 155 470 185 480M150 410L155 470 160 500M175 430L130 440M182 435L165 460 200 455M130 490L185 490M430 640L440 600 465 590M410 610L440 600"/>
        <g class="line"><circle cx="422" cy="438" r="8"/><circle cx="435" cy="478" r="6"/><circle cx="355" cy="588" r="9"/><circle cx="378" cy="575" r="9"/><circle cx="385" cy="590" r="7"/><circle cx="425" cy="555" r="12"/><circle cx="450" cy="575" r="12"/><circle cx="425" cy="580" r="10"/><circle cx="448" cy="545" r="10"/><circle cx="430" cy="638" r="5"/><circle cx="450" cy="662" r="5"/><circle cx="395" cy="672" r="9"/><circle cx="405" cy="665" r="7"/><circle cx="422" cy="684" r="7"/><circle cx="390" cy="228" r="5"/><circle cx="488" cy="705" r="9"/><circle cx="490" cy="733" r="6"/><circle cx="505" cy="768" r="9"/><circle cx="518" cy="766" r="10"/><circle cx="512" cy="775" r="9"/><circle cx="522" cy="775" r="6"/><circle cx="310" cy="755" r="9"/><circle cx="325" cy="750" r="9"/><circle cx="320" cy="765" r="8"/><circle cx="338" cy="670" r="4"/><circle cx="190" cy="468" r="7"/><circle cx="165" cy="445" r="10"/><circle cx="150" cy="460" r="8"/><circle cx="365" cy="775" r="8"/><circle cx="268" cy="350" r="7"/><circle cx="285" cy="350" r="7"/><circle cx="545" cy="770" r="6"/></g>
      </g></svg>
      <h2>United Kingdom</h2>
      <ul><li>13<span>Data Projects</span></li><li>3,005<span>Questions</span></li><li>1<span>Vendors</span></li><li>0<span>Individuals</span></li><li>0<span>Followers</span></li></ul>
      <footer><button type="button" class="follow">Follow</button><button type="button" class="explore">Explore</button></footer>
    </article>

    <article class="card">
      <a href="#" class="sub"><svg><use href="#globe"/></svg>46 Subregions</a>
      <svg class="map" viewBox="0 0 300 300" role="img" aria-label="Map of Cambodia"><g transform="translate(-20 6) scale(.6 .3333)">
        <path class="land" d="M33 262L55 260 55 245 70 215 82 180 92 150 105 135 125 125 150 120 160 113 165 123 205 125 215 117 235 123 255 120 268 113 283 122 287 143 297 155 303 130 320 170 335 160 350 170 360 180 370 200 390 198 396 178 385 155 388 140 380 127 398 122 405 103 420 115 425 105 430 87 440 110 455 133 465 125 475 130 485 115 497 95 505 82 513 92 525 67 520 110 510 112 508 160 518 190 520 220 534 270 534 295 528 315 522 370 530 420 528 465 518 490 508 477 492 490 472 522 455 525 450 540 420 543 424 570 420 590 382 577 378 595 365 600 368 655 398 700 398 747 385 735 375 740 360 708 330 718 318 737 305 722 290 728 293 760 280 790 250 795 237 810 225 795 188 785 175 765 172 785 155 795 145 775 150 760 160 755 163 730 158 700 145 682 135 700 132 725 120 722 108 730 105 665 98 640 108 630 92 600 95 575 78 535 68 510 70 470 72 460 55 430 48 415 48 365 38 340 33 310ZM117 750l4 6-2 6zM124 765l2 20z"/>
        <path class="line" d="M33 275L62 277 75 285 95 280 135 287 137 205 125 182 100 145M137 205L155 200 175 170 200 145 200 123M135 287L158 303 172 340 210 405 232 440 250 432 268 440 275 460 278 500 302 498 305 470 322 468 330 455 358 450M172 340L160 370 155 430 100 445 72 463M235 123L238 150 230 200 233 258 255 265 245 310 235 350 225 380 210 405M245 310L275 300 280 340 300 325 338 285 342 215 368 202M338 285L345 320 358 450 362 488 385 505 402 543 420 543M345 320L372 340 388 303 415 290 440 298 460 330 482 330 488 308 515 305 534 308M440 110L445 220 435 260 440 298M418 290L418 330 435 360 440 385 418 420 420 450 438 480 458 500 458 522M232 440L228 475 210 495 212 530 240 580 265 570 275 560 278 500M75 528L105 538 140 512 172 550 205 540 212 520M172 550L172 590 198 620 202 683 185 710 162 755M202 683L235 690 255 690 262 650 255 630 262 570M262 650L285 655 290 720M235 690L245 725 258 735 260 790M275 560L302 578 318 560 330 575 365 585 368 600M302 578L302 610 312 640 305 722M368 610L352 620 350 680 345 710M186 710L186 785M48 360L62 340 72 350 74 400 62 418 48 415M268 600L278 592 282 630 272 632Z"/>
        <path class="gap" d="M94 575l6 15 1 30 8 10-10 30-4-22z"/>
      </g></svg>
      <h2>Cambodia</h2>
      <ul><li>12<span>Data Projects</span></li><li>3,194<span>Questions</span></li><li>0<span>Vendors</span></li><li>0<span>Individuals</span></li><li>0<span>Followers</span></li></ul>
      <footer><button type="button" class="follow">Follow</button><button type="button" class="explore">Explore</button></footer>
    </article>

    <article class="card">
      <a href="#" class="sub"><svg><use href="#globe"/></svg>27 Subregions</a>
      <svg class="map" viewBox="0 0 300 300" role="img" aria-label="Map of Ecuador"><g transform="translate(-627 6) scale(.6 .3333)">
        <path class="land" d="M1217 120L1235 120 1245 105 1260 95 1292 85 1303 48 1325 75 1345 100 1375 125 1395 145 1398 172 1420 180 1440 190 1468 190 1475 168 1500 195 1520 215 1540 232 1525 235 1538 262 1542 330 1533 340 1523 405 1490 480 1448 532 1370 580 1345 640 1335 632 1330 660 1318 705 1312 765 1295 795 1288 825 1270 820 1258 800 1255 770 1235 758 1210 740 1195 762 1190 755 1203 735 1190 728 1190 708 1205 705 1210 690 1205 635 1225 620 1230 590 1238 560 1238 470 1230 475 1222 510 1205 550 1190 525 1170 505 1157 488 1172 480 1168 420 1172 380 1160 345 1185 330 1200 298 1190 265 1200 240 1220 190 1222 140ZM1208 550L1225 548 1215 582 1205 585ZM1060 150l4-8 6 18 5 22 6 2-2 14-10 8-8-4 6-15 4-4-6-20zM1058 166l4 0-2 8zM1085 160l5 4-3 4zM1094 180l9-1 0 12-7 2zM1125 200l8-10-5 12zM1094 128l3 2zM1095 222l3 2z"/>
        <path class="line" d="M1325 75L1328 120 1320 165 1300 170 1290 190 1270 180 1265 215 1250 220 1242 178 1222 185M1328 115L1342 130 1350 155 1370 175 1385 140M1290 190L1330 190 1345 198 1362 200 1370 175M1362 200L1370 215 1405 232 1432 230 1452 270 1480 280 1495 270 1530 280 1545 295M1370 215L1350 240 1340 290 1332 300 1312 298 1295 262 1305 245 1285 222 1250 220 1262 240 1258 290 1255 320 1240 325 1232 370 1225 380 1215 365 1240 325M1258 290L1282 290 1270 360 1330 355 1332 300M1282 290L1295 262M1405 232L1408 260 1390 285 1390 332 1418 310M1390 335L1420 345 1425 358 1455 350 1465 375 1500 380 1523 405M1420 345L1390 355 1350 370 1330 355M1350 370L1350 395 1300 400 1298 370M1350 395L1370 450 1410 490 1432 530 1448 532M1270 360L1268 410 1278 490 1262 500 1235 420 1232 370M1298 400L1285 480 1278 490 1290 505 1325 500 1332 400M1262 500L1255 525 1270 548 1285 540 1300 562 1325 530 1325 500M1255 525L1240 590M1325 530L1310 610 1295 625 1282 660 1280 760 1262 795M1230 590L1250 605 1250 625 1270 625 1262 680 1210 690M1270 625L1282 660M1295 625L1305 652 1330 650M1170 422L1188 425 1190 445 1205 440 1225 360M1188 445L1208 475 1205 510 1190 525"/>
      </g></svg>
      <h2>Ecuador</h2>
      <ul><li>10<span>Data Projects</span></li><li>2,718<span>Questions</span></li><li>0<span>Vendors</span></li><li>0<span>Individuals</span></li><li>0<span>Followers</span></li></ul>
      <footer><button type="button" class="follow">Follow</button><button type="button" class="explore">Explore</button></footer>
    </article>
  </section>
</main>

<nav class="pager" aria-label="Pages">
  <button type="button" class="arrow off" aria-label="Previous page"><svg class="chev prev"><use href="#chevron"/></svg></button>
  <div class="pages"><button type="button" class="active">1</button><button type="button">2</button><button type="button">3</button><button type="button">4</button><button type="button">5</button><span>...</span><button type="button" class="last">782</button></div>
  <button type="button" class="arrow" aria-label="Next page"><svg class="chev next"><use href="#chevron"/></svg></button>
  <label class="caption" for="show">Show:</label>
  <div class="field"><select id="show"><option>12</option></select><svg class="chev"><use href="#chevron"/></svg></div>
  <label class="caption goto" for="goto">Go to :</label>
  <div class="field"><input id="goto" type="text" placeholder="1"></div>
  <span class="total">of 782</span>
</nav>
</body>
</html>
```
FILE: styles.css
```css
* { box-sizing: border-box; }
body { margin: 0; background: #f3f3f3; color: #3b3f42; font-family: Inter, "Liberation Sans", sans-serif; font-size: 17px; line-height: 20px; }
a { color: inherit; text-decoration: none; }
button, input, select { font: inherit; color: inherit; background: none; border: 0; padding: 0; margin: 0; outline: 0; }
select { appearance: none; }
.sprite { position: absolute; width: 0; height: 0; }
.chev { width: 14px; height: 14px; flex: none; pointer-events: none; }
.glass { width: 18px; height: 18px; flex: none; }

.topbar { display: flex; align-items: center; justify-content: space-between; height: 70px; padding: 0 65px 0 60px; background: #333; color: #d0d0d0; }
.logo { display: flex; flex-direction: column; width: 154px; color: #c6c6c6; }
.wordmark { font: 29px/32px "Liberation Serif", serif; white-space: nowrap; }
.wordmark b { font-size: 38px; font-weight: 400; }
.tagline { display: flex; align-items: center; justify-content: space-between; padding: 0 2px; font-size: 9px; font-weight: 600; line-height: 12px; }
.tagline i { width: 28px; height: 1px; background: #8a6d2a; }
.finder { display: flex; align-items: center; gap: 10px; flex: none; width: 1176px; margin-left: 24px; font-size: 14px; }
.pill { display: flex; align-items: center; height: 40px; border: 1px solid #fff; border-radius: 20px; padding: 0 15px; }
.pill select { flex: 1; min-width: 0; }
.library { width: 224px; }
.find { flex: 1; height: 42px; border-radius: 21px; padding: 0 12px 0 16px; gap: 11px; }
.find input { flex: 1; font-size: 15px; }
.find input::placeholder { color: #c4c4c4; opacity: 1; }
.advanced { display: flex; align-items: center; gap: 4px; color: #c4c4c4; font-size: 15px; }
.advanced svg { width: 17px; height: 17px; }
.language { width: 92px; font-weight: 500; padding-right: 17px; }
.account { display: flex; align-items: center; gap: 30px; color: #cacaca; }
.account button, .account svg { display: block; }
.mainnav { display: flex; justify-content: space-between; height: 50px; padding: 0 60px; background: #434345; color: #ccc; font-weight: 500; }
.mainnav a { height: 47px; padding: 13px 15px 0; }
.mainnav .current { color: #609af8; border-bottom: 2px solid #609af8; }

main { padding: 0 60px; }
h1 { margin: 0; padding: 38px 13px 32px; font-size: 38px; font-weight: 400; line-height: 48px; }
.sortbar { display: flex; align-items: center; height: 72px; padding: 0 12px 0 25px; background: #fff; border: 1px solid #d4d4d4; border-radius: 36px; color: #4b4b4b; }
.sortlabel { font-weight: 600; margin-right: 22px; }
.sorts { display: flex; gap: 44px; font-weight: 500; }
.sorts .on { color: #1a5cbe; }
.regionsearch { display: flex; align-items: center; gap: 28px; width: 534px; height: 45px; margin-left: auto; padding: 0 17px; background: #f3f3f3; border: 1px solid #d1d5db; border-radius: 23px; color: #6b7280; }
.regionsearch input { flex: 1; }
.regionsearch input::placeholder { color: #6b7280; opacity: 1; }

.grid { display: grid; grid-template-columns: repeat(3, 1fr); gap: 20px; margin-top: 13px; }
.card { display: flex; flex-direction: column; background: #fff; border: 1px solid #d0d0d0; border-radius: 16px; }
.sub { display: flex; align-items: center; gap: 11px; align-self: flex-start; margin: 37px 0 0 45px; color: #1a5cbe; }
.sub svg { width: 19px; height: 19px; }
.map { width: 300px; height: 300px; margin: 44px auto 35px; overflow: visible; }
.land { fill: #9ba8c0; stroke: #9ba8c0; stroke-width: 1px; stroke-linejoin: round; vector-effect: non-scaling-stroke; }
.line { fill: none; stroke: #f4f5f7; stroke-width: 1px; stroke-linejoin: round; }
.line, .line circle { vector-effect: non-scaling-stroke; }
.gap { fill: #fff; }
h2 { margin: 0; color: #2a2a2a; font-size: 25px; font-weight: 800; line-height: 32px; text-align: center; }
.card ul { display: flex; flex-wrap: wrap; gap: 15px 13px; list-style: none; margin: 0; padding: 25px 20px 31px; color: #9dacb8; font-weight: 500; }
.card li { display: flex; align-items: center; }
.card li::before { content: ""; width: 8px; height: 8px; margin-right: 6px; border-radius: 50%; background: #9dacb8; }
.card li span { margin-left: 11px; }
.card footer { display: flex; justify-content: space-between; align-items: flex-start; padding: 20px; border-top: 1px solid #e2e2e2; }
.follow { width: 106px; height: 44px; padding-top: 3px; border: 1px solid #1a5cbe; border-radius: 22px; color: #1a5cbe; font-weight: 500; }
.explore { width: 125px; height: 42px; border-radius: 21px; background: #1a5cbe; color: #fff; font-weight: 600; }

.pager { display: flex; align-items: center; justify-content: center; height: 70px; padding: 32px 0 0 13px; overflow: hidden; }
.pages { display: flex; align-items: center; font-size: 14px; font-weight: 500; color: #333; text-align: center; }
.pages button { width: 42px; height: 36px; }
.pages .active { width: 38px; border-radius: 8px; background: #1a5cbe; color: #fff; box-shadow: 0 1px 3px #0003; }
.pages span { width: 50px; color: #888; font-weight: 400; }
.pages .last { width: 56px; }
.arrow { display: flex; padding: 0 13px; color: #333; }
.arrow.off { color: #999; }
.prev { transform: rotate(90deg); }
.next { transform: rotate(-90deg); }
.caption { margin: 0 15px 0 17px; color: #000; font-weight: 600; }
.goto { margin-left: 35px; }
.field { display: flex; align-items: center; width: 80px; height: 45px; flex: none; padding: 0 18px 0 16px; background: #fff; border: 1px solid #e2e2e2; border-radius: 6px; color: #555; }
.field select, .field input { flex: 1; width: 20px; min-width: 0; }
.field .chev { color: #888; }
.total { margin-left: 15px; color: #6b7b8a; }
```
